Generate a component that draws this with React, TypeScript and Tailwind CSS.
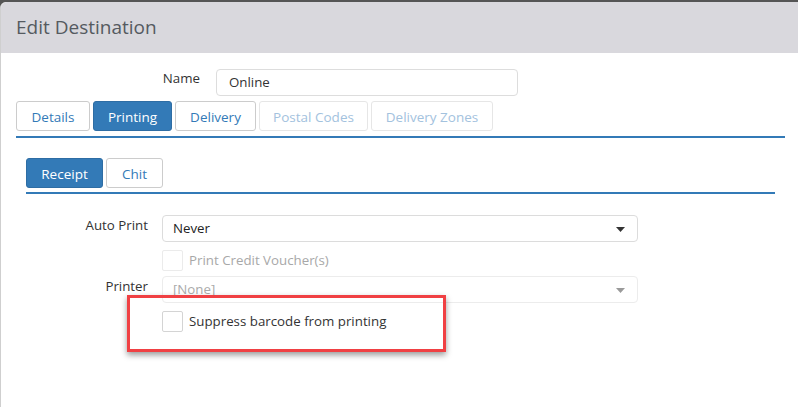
import React from 'react';

const font = { fontFamily: '"Segoe UI", "Open Sans", "Noto Sans", sans-serif' };

const tabs = [
  { label: 'Details', state: 'idle', w: 'w-[74px]' },
  { label: 'Printing', state: 'active', w: 'w-[79px]' },
  { label: 'Delivery', state: 'idle', w: 'w-[81px]' },
  { label: 'Postal Codes', state: 'disabled', w: 'w-[109px]' },
  { label: 'Delivery Zones', state: 'disabled', w: 'w-[122px]' },
];

const Tab: React.FC<{ label: string; state: string; w: string }> = ({ label, state, w }) => {
  const cls =
    state === 'active'
      ? 'bg-[#337ab7] border-[#2e6da4] text-white'
      : state === 'disabled'
      ? 'bg-white border-[#e6e6e6] text-[#a3c2de]'
      : 'bg-white border-[#cccccc] text-[#337ab7]';
  return (
    <div className={`${w} h-[30px] pt-[2px] flex items-center justify-center border rounded-[3px] text-[13.5px] ${cls}`}>{label}</div>
  );
};

const Caret: React.FC<{ muted?: boolean }> = ({ muted }) => (
  <svg width="9" height="5" viewBox="0 0 9 5" className="mr-[12px]">
    <path d="M0 0 L9 0 L4.5 5 Z" fill={muted ? '#9a9a9a' : '#333'} />
  </svg>
);

const Checkbox: React.FC<{ muted?: boolean }> = ({ muted }) => (
  <div className={`w-[21px] h-[21px] rounded-[2px] border bg-white ${muted ? 'border-[#ebebeb]' : 'border-[#d4d4d4]'}`} />
);

export default function App() {
  return (
    <div className="w-[798px] h-[407px] bg-[#555] pt-[2px] overflow-hidden" style={font}>
      <div className="h-[405px] bg-white rounded-tl-[6px] border-l border-[#cfcfcf] flex flex-col">
        {/* dialog header */}
        <div className="h-[51px] bg-[#d9d8dd] rounded-tl-[6px] flex items-center pl-[15px]">
          <h1 className="text-[19px] text-[#555a60] font-normal">Edit Destination</h1>
        </div>

        <div className="pl-[15px] pr-[13px] pt-[16px]">
          {/* name field */}
          <div className="flex items-center h-[26px]">
            <label className="w-[200px] text-right text-[13.3px] text-[#333] pr-[16px] -mt-[6px]">Name</label>
            <div className="w-[302px] h-[27px] border border-[#dddddd] rounded-[4px] flex items-center pl-[12px] pt-[1px] text-[13.3px] text-[#333]">
              Online
            </div>
          </div>

          {/* top tabs */}
          <div className="flex gap-[3px] mt-[6px]">
            {tabs.map((t) => (
              <Tab key={t.label} label={t.label} state={t.state} w={t.w} />
            ))}
          </div>
          <div className="h-[2px] bg-[#337ab7] mt-[5px]" />

          {/* printing section */}
          <div className="pl-[10px] pr-[10px] pt-[20px]">
            <div className="flex gap-[3px]">
              <Tab label="Receipt" state="active" w="w-[77px]" />
              <Tab label="Chit" state="idle" w="w-[57px]" />
            </div>
            <div className="h-[2px] bg-[#337ab7] mt-[4px]" />

            <div className="relative mt-[21px]">
              <div className="flex items-start">
                <label className="w-[122px] text-right text-[13.3px] text-[#333] pt-[1px]">Auto Print</label>
                <div className="ml-[14px] w-[476px] h-[27px] border border-[#dcdcdc] rounded-[4px] flex items-center justify-between pl-[10px] pt-[1px] text-[13.3px] text-[#222]">
                  <span>Never</span>
                  <Caret />
                </div>
              </div>

              <div className="flex items-center ml-[136px] mt-[8px] gap-[6px]">
                <Checkbox muted />
                <span className="text-[13.3px] text-[#a8a8a8]">Print Credit Voucher(s)</span>
              </div>

              <div className="flex items-start mt-[5px]">
                <label className="w-[122px] text-right text-[13.3px] text-[#333] pt-[1px]">Printer</label>
                <div className="ml-[14px] w-[476px] h-[27px] border border-[#ececec] rounded-[4px] flex items-center justify-between pl-[10px] pt-[1px] text-[13.3px] text-[#aaa]">
                  <span>[None]</span>
                  <Caret muted />
                </div>
              </div>

              <div className="flex items-center ml-[136px] mt-[8px] gap-[6px]">
                <Checkbox />
                <span className="text-[13.3px] text-[#333]">Suppress barcode from printing</span>
              </div>

              {/* highlight frame */}
              <div className="absolute left-[101px] top-[80px] w-[319px] h-[57px] border-[3px] border-[#f04043] shadow-[0_3px_6px_rgba(0,0,0,0.4)]" />
            </div>
          </div>
        </div>
      </div>
    </div>
  );
}
